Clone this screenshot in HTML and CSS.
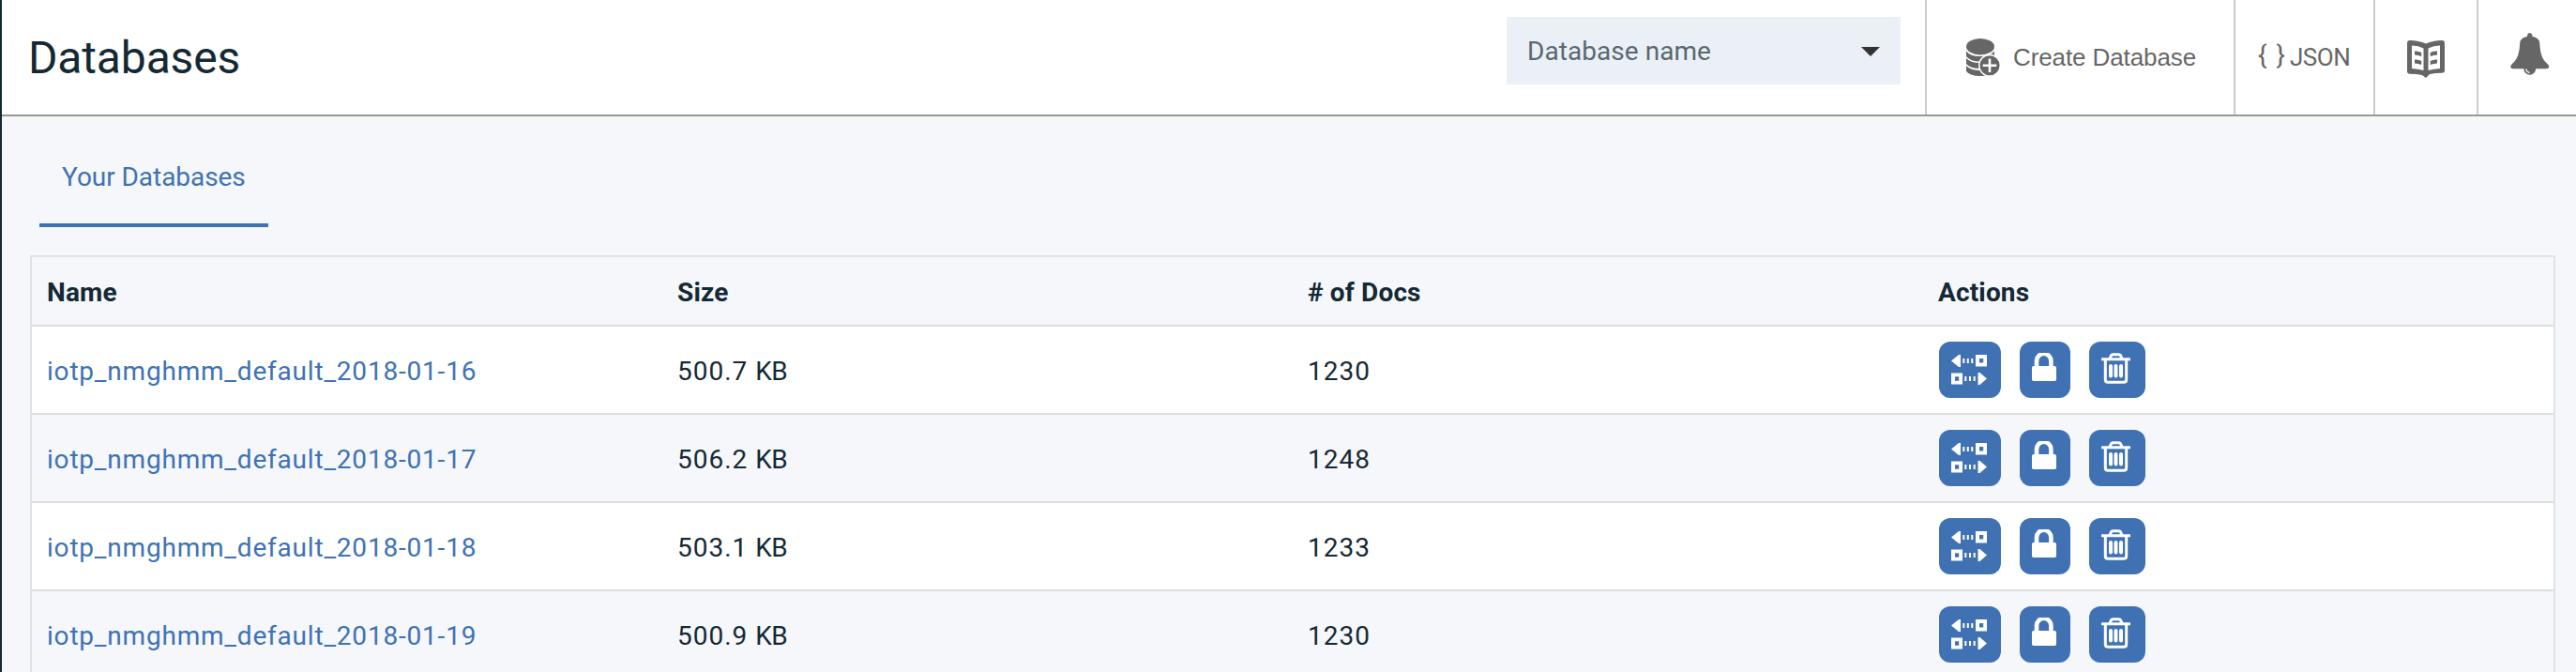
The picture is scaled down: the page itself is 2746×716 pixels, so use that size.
FILE: index.html
```html
<!DOCTYPE html>
<html lang="en">
<head>
<meta charset="utf-8">
<title>Databases</title>
<link rel="stylesheet" href="styles.css">
</head>
<body>
<svg class="sprite" width="0" height="0" aria-hidden="true">
  <symbol id="replicate" viewBox="0 0 38 32">
    <path d="M0 6.500 8 0h2v13H8zM26 0h12v12.500H26zM30 4v4.500h4.200V4zM12.300 4h2v5h-2zM16.800 4h2v5h-2zM21.300 4h2v5h-2zM0 19.500h12V31.500H0zM4 23.300v4.500h4.200v-4.500zM14.300 23h2v5h-2zM19 23h2v5h-2zM23.700 23h2v5h-2zM28.500 19h2L38 25.500 30.500 32h-2z" fill="#fff" fill-rule="evenodd"/>
  </symbol>
  <symbol id="lock" viewBox="0 0 26 30">
    <path d="M5 15V8.500a7.700 7.700 0 0 1 15.400 0V15" fill="none" stroke="#fff" stroke-width="4.600"/>
    <rect y="14" width="26" height="16" rx="1.800" fill="#fff"/>
  </symbol>
  <symbol id="trash" viewBox="0 0 31 33">
    <path d="M1 6.700h29M9 6l1.600-3.400q.5-.9 1.600-.9h6.600q1.100 0 1.600.9L22 6M4.300 7v21.500q0 2.800 2.800 2.800h16.800q2.800 0 2.800-2.800V7" fill="none" stroke="#fff" stroke-width="3" stroke-linecap="round"/>
    <path d="M10 14v10.500M15.500 14v10.500M21 14v10.500" stroke="#fff" stroke-width="4" stroke-linecap="round"/>
  </symbol>
</svg>
<div class="app">
  <header class="topbar">
    <h1 class="title">Databases</h1>
    <div class="select"><span class="placeholder">Database name</span><span class="caret"></span></div>
    <a class="tool create">
      <svg width="37" height="41" viewBox="0 0 37 41">
        <g fill="#666">
          <ellipse cx="15" cy="8.700" rx="15" ry="8.700"/>
          <path d="M0 13.500Q4 19 15 19t15-5.500V20Q26 24.500 15 24.500T0 19z"/>
          <path d="M0 21q4 5 15 5t15-5v6.500Q26 32 15 32T0 27z"/>
          <path d="M0 29q4 5 15 5t15-5v6q-4 5-15 5T0 35z"/>
          <circle cx="25" cy="28.800" r="11.300" stroke="#fff" stroke-width="1.500"/>
        </g>
        <path d="M25 21.500v14.600M17.700 28.800h14.600" stroke="#fff" stroke-width="2.600"/>
      </svg>
      <span class="create-label">Create Database</span>
    </a>
    <a class="tool json"><span class="braces">{ }</span><span class="json-label">JSON</span></a>
    <a class="tool docs">
      <svg width="40" height="40" viewBox="0 0 40 40">
        <path d="M3 0Q12 0 20 3.600Q28 0 37 0q3 0 3 3v29q0 2.700-3 2.700-7 0-13 1.300L20 40l-4-3Q10 35.700 3 35.700q-3 0-3-2.700V3q0-3 3-3zM5 5.500V30q6.500.3 12.500 2V8.500Q12 5.700 5 5.500zM35 5.500Q28 5.700 22.500 8.500V32q6-1.700 12.500-2z" fill="#666" fill-rule="evenodd"/>
        <path d="M8 11.500q4-.5 7.300 1.500v4Q12 15.500 8 15.500zM8 20.500q4-.5 7.300 1.500v4Q12 24.500 8 24.500zM32 11.500q-4-.5-7.300 1.500v4q3.300-1.500 7.300-1.500zM32 20.500q-4-.5-7.300 1.500v4q3.300-1.500 7.300-1.500z" fill="#666"/>
      </svg>
    </a>
    <a class="tool bell">
      <svg width="42" height="45" viewBox="0 0 42 45">
        <path d="M18 4V2.500Q18.500 0 20.700 0t2.700 2.500V4C28 4.500 31 7 31.300 11c.7 11 2 16.500 8.200 22q2 1.500 1.700 3.500-.3 1.700-2.500 1.700H2.800Q.6 38.200.3 36.500 0 34.500 2 33c6.200-5.500 7.500-11 8.200-22C10.500 7 13.500 4.500 18 4z" fill="#666"/>
        <path d="M14.300 38a6.400 6.800 0 0 0 12.800 0z" fill="#666"/>
        <path d="M16.800 38.500q.6 3.500 3.700 4" fill="none" stroke="#fff" stroke-width="1.300"/>
      </svg>
    </a>
  </header>
  <nav class="tabs"><a class="tab">Your Databases</a></nav>
  <table class="list">
    <thead><tr><th>Name</th><th>Size</th><th>#&nbsp;of Docs</th><th>Actions</th></tr></thead>
    <tbody>
      <tr><td><a class="db">iotp_nmghmm_default_2018-01-16</a></td><td>500.7 <span class="unit">KB</span></td><td>1230</td><td><div class="actions"><a class="btn wide"><svg width="38" height="32"><use href="#replicate"/></svg></a><a class="btn narrow"><svg width="26" height="30"><use href="#lock"/></svg></a><a class="btn"><svg width="31" height="33"><use href="#trash"/></svg></a></div></td></tr>
      <tr><td><a class="db">iotp_nmghmm_default_2018-01-17</a></td><td>506.2 <span class="unit">KB</span></td><td>1248</td><td><div class="actions"><a class="btn wide"><svg width="38" height="32"><use href="#replicate"/></svg></a><a class="btn narrow"><svg width="26" height="30"><use href="#lock"/></svg></a><a class="btn"><svg width="31" height="33"><use href="#trash"/></svg></a></div></td></tr>
      <tr><td><a class="db">iotp_nmghmm_default_2018-01-18</a></td><td>503.1 <span class="unit">KB</span></td><td>1233</td><td><div class="actions"><a class="btn wide"><svg width="38" height="32"><use href="#replicate"/></svg></a><a class="btn narrow"><svg width="26" height="30"><use href="#lock"/></svg></a><a class="btn"><svg width="31" height="33"><use href="#trash"/></svg></a></div></td></tr>
      <tr><td><a class="db">iotp_nmghmm_default_2018-01-19</a></td><td>500.9 <span class="unit">KB</span></td><td>1230</td><td><div class="actions"><a class="btn wide"><svg width="38" height="32"><use href="#replicate"/></svg></a><a class="btn narrow"><svg width="26" height="30"><use href="#lock"/></svg></a><a class="btn"><svg width="31" height="33"><use href="#trash"/></svg></a></div></td></tr>
    </tbody>
  </table>
</div>
</body>
</html>
```
FILE: styles.css
```css
* { box-sizing: border-box; }
body {
  margin: 0;
  height: 716px;
  overflow: hidden;
  font-family: Roboto, "Liberation Sans", sans-serif;
  font-size: 28px;
  color: #152934;
  background: #f5f7fb;
}
.sprite { position: absolute; }
.app { height: 716px; overflow: hidden; border-left: 2px solid #152934; }
.topbar {
  display: flex;
  height: 124px;
  background: #fff;
  border-bottom: 2px solid #979998;
}
.title {
  flex: 1;
  margin: 0;
  padding: 34px 0 0 28px;
  font-size: 48px;
  font-weight: 400;
  line-height: 56px;
  letter-spacing: -0.15px;
}
.select {
  display: flex;
  align-items: center;
  justify-content: space-between;
  width: 420px;
  height: 72px;
  margin: 18px 26px 0 0;
  padding: 0 22px 0 22px;
  background: #ebf0f7;
  color: #5a6872;
}
.placeholder { letter-spacing: 0.05px; }
.caret {
  border: 10px solid transparent;
  border-top-color: #333;
  border-bottom: 0;
  margin-top: 2px;
}
.tool { border-left: 2px solid #ccc; color: #666; display: flex; }
.create { width: 329px; padding: 41px 0 0 42px; }
.create-label {
  margin-left: 13px;
  font: 26px/40px "Liberation Sans", Arial, sans-serif;
  letter-spacing: -0.1px;
  white-space: nowrap;
}
.json { width: 149px; padding: 41px 0 0 24px; font-size: 26px; line-height: 40px; white-space: nowrap; }
.braces { width: 34px; font-size: 28px; line-height: 36px; word-spacing: 3px; }
.json-label { letter-spacing: -0.5px; }
.docs { width: 110px; padding: 43px 0 0 34px; }
.bell { width: 106px; padding: 35px 0 0 34px; }
.tabs { height: 148px; padding: 0 40px; display: flex; }
.tab {
  width: 244px;
  height: 118px;
  padding: 49px 0 0 24px;
  line-height: 32px;
  letter-spacing: -0.05px;
  color: #4072b3;
  border-bottom: 4px solid #4072b3;
}
.list {
  width: 2692px;
  margin-left: 30px;
  table-layout: fixed;
  border-spacing: 0;
  border: 2px solid #dfe3e6;
}
.list th, .list td {
  padding: 0 0 0 16px;
  text-align: left;
  border-bottom: 2px solid #dcddde;
}
.list th { height: 74px; padding-top: 2px; font-weight: 700; letter-spacing: 0.15px; }
.list td { height: 94px; padding-top: 2px; letter-spacing: 1px; }
.list tbody tr { background: #fff; }
.list tbody tr:nth-child(even) { background: #f5f7fb; }
.db { color: #4072b3; letter-spacing: 0.8px; }
.unit { letter-spacing: -0.5px; }
.actions { display: flex; gap: 20px; padding: 0 0 2px 1px; }
.btn {
  display: flex;
  justify-content: center;
  width: 60px;
  height: 60px;
  padding-top: 12px;
  padding-right: 3px;
  background: #4072b3;
  border-radius: 12px;
}
.btn.wide { width: 66px; padding-top: 14px; padding-right: 2px; }
.btn.narrow { width: 54px; padding-right: 2px; }
```
